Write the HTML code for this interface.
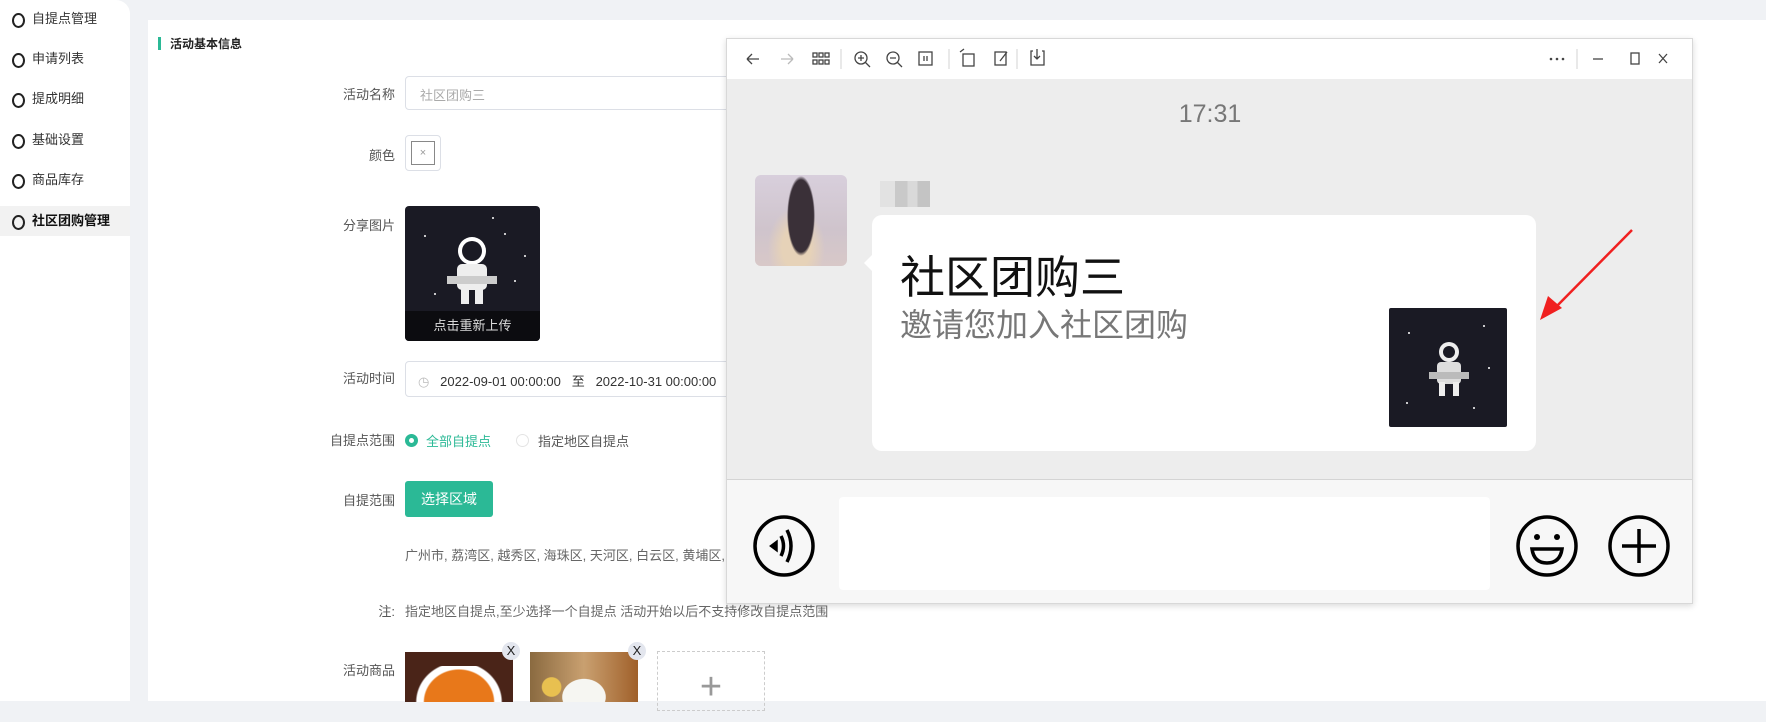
<!DOCTYPE html>
<html><head><meta charset="utf-8"><style>
*{margin:0;padding:0;box-sizing:border-box}
body{width:1766px;height:701px;background:#f0f2f5;font-family:"Liberation Sans","Noto Sans CJK SC",sans-serif;position:relative;overflow:hidden;color:#606266}
.a{position:absolute}
.side{left:0;top:0;width:130px;height:701px;background:#fff;border-top-right-radius:14px}
.si{position:absolute;left:0;width:130px;height:30px;font-size:13px;color:#333;line-height:30px;padding-left:32px}
.si:before{content:"";position:absolute;left:12px;top:9px;width:9px;height:11px;border:2px solid #222;border-radius:50%}
.card{left:148px;top:20px;width:1618px;height:681px;background:#fff}
.lbl{position:absolute;right:1371px;font-size:13px;color:#555;text-align:right;white-space:nowrap}
.inp{position:absolute;border:1px solid #dcdfe6;border-radius:4px;background:#fff}
</style></head><body>
<div class="a side">
<div class="si" style="top:4px">自提点管理</div>
<div class="si" style="top:44px">申请列表</div>
<div class="si" style="top:84px">提成明细</div>
<div class="si" style="top:125px">基础设置</div>
<div class="si" style="top:165px">商品库存</div>
<div class="si" style="top:206px;background:#f2f2f2;font-weight:bold;color:#111">社区团购管理</div>
</div>
<div class="a card"></div>
<div class="a" style="left:158px;top:37px;width:3px;height:13px;background:#2bb996"></div>
<div class="a" style="left:170px;top:35px;font-size:12px;font-weight:bold;color:#222">活动基本信息</div>

<div class="lbl" style="top:84px">活动名称</div>
<div class="inp" style="left:405px;top:76px;width:330px;height:34px;font-size:13px;color:#aaa;padding:8px 14px">社区团购三</div>
<div class="lbl" style="top:145px">颜色</div>
<div class="inp" style="left:405px;top:135px;width:36px;height:36px;padding:5px"><div style="width:24px;height:24px;border:1px solid #888;font-size:11px;color:#999;text-align:center;line-height:22px">×</div></div>
<div class="lbl" style="top:215px">分享图片</div>
<div class="a" style="left:405px;top:206px;width:135px;height:135px;background:#1a1a24;border-radius:4px;overflow:hidden">
<svg width="135" height="105" viewBox="0 0 135 105"><g fill="#fff"><circle cx="20" cy="30" r="1"/><circle cx="88" cy="12" r="1"/><circle cx="120" cy="50" r="1"/><circle cx="110" cy="75" r="1"/><circle cx="30" cy="88" r="1"/><circle cx="100" cy="28" r="1"/></g>
<circle cx="67" cy="45" r="14" fill="#fff"/><circle cx="67" cy="45" r="10" fill="#1a1a24"/><rect x="52" y="58" width="30" height="26" rx="5" fill="#eee"/><rect x="42" y="70" width="50" height="8" fill="#ccc"/><rect x="56" y="80" width="8" height="18" fill="#eee"/><rect x="70" y="80" width="8" height="18" fill="#eee"/></svg>
<div style="position:absolute;left:0;bottom:0;width:135px;height:30px;background:#0c0c10;color:#ddd;font-size:13px;text-align:center;line-height:30px">点击重新上传</div></div>
<div class="lbl" style="top:368px">活动时间</div>
<div class="inp" style="left:405px;top:361px;width:330px;height:36px;font-size:13px;color:#333;padding:9px 12px;white-space:nowrap"><span style="color:#bbb">◷</span>&nbsp;&nbsp; 2022-09-01 00:00:00 &nbsp; 至 &nbsp; 2022-10-31 00:00:00</div>
<div class="lbl" style="top:430px">自提点范围</div>
<div class="a" style="left:405px;top:434px;width:13px;height:13px;border-radius:50%;border:4px solid #2bb996"></div>
<div class="a" style="left:426px;top:431px;font-size:13px;color:#2bb996">全部自提点</div>
<div class="a" style="left:516px;top:434px;width:13px;height:13px;border-radius:50%;border:1px solid #e4e4e4"></div>
<div class="a" style="left:538px;top:431px;font-size:13px;color:#555">指定地区自提点</div>
<div class="lbl" style="top:490px">自提范围</div>
<div class="a" style="left:405px;top:481px;width:88px;height:36px;background:#2bb996;border-radius:3px;color:#fff;font-size:14px;text-align:center;line-height:36px">选择区域</div>
<div class="a" style="left:405px;top:545px;font-size:13px;color:#666;white-space:nowrap">广州市, 荔湾区, 越秀区, 海珠区, 天河区, 白云区, 黄埔区, 番</div>
<div class="lbl" style="top:601px">注:</div>
<div class="a" style="left:405px;top:601px;font-size:13px;color:#666;white-space:nowrap">指定地区自提点,至少选择一个自提点 活动开始以后不支持修改自提点范围</div>
<div class="lbl" style="top:660px">活动商品</div>
<div class="a" style="left:405px;top:652px;width:108px;height:50px;background:linear-gradient(#4a2418 0 14px,transparent 14px),radial-gradient(ellipse at 50% 100%,#e8781a 45%,#fff 47%,#fff 55%,#4a2418 57%)"></div>
<div class="a" style="left:530px;top:652px;width:108px;height:50px;background:radial-gradient(ellipse at 50% 90%,#f6f6f2 28%,transparent 29%),radial-gradient(circle at 20% 70%,#e8c050 10%,transparent 11%),linear-gradient(90deg,#8a6a40,#c9a070 50%,#a0602a)"></div>
<div class="a" style="left:502px;top:642px;width:18px;height:18px;border-radius:50%;background:#e3e6ee;font-size:13px;color:#222;text-align:center;line-height:18px">X</div>
<div class="a" style="left:628px;top:642px;width:18px;height:18px;border-radius:50%;background:#e3e6ee;font-size:13px;color:#222;text-align:center;line-height:18px">X</div>
<div class="a" style="left:657px;top:651px;width:108px;height:60px;border:1px dashed #ccc;font-size:38px;color:#999;text-align:center;line-height:70px;font-weight:200">+</div>

<!-- window -->
<div class="a" style="left:726px;top:38px;width:967px;height:566px;background:#fff;border:1px solid #d8d8d8;box-shadow:0 2px 6px rgba(0,0,0,.15)"></div>
<svg class="a" style="left:727px;top:39px" width="965" height="40" fill="none" stroke="#444" stroke-width="1.3">
<path d="M20 20h12M20 20l5-5M20 20l5 5"/>
<path d="M54 20h12M66 20l-5-5M66 20l-5 5" stroke="#bbb"/>
<g><rect x="86" y="14" width="4" height="4"/><rect x="92" y="14" width="4" height="4"/><rect x="98" y="14" width="4" height="4"/><rect x="86" y="21" width="4" height="4"/><rect x="92" y="21" width="4" height="4"/><rect x="98" y="21" width="4" height="4"/></g>
<path d="M114 10v20M222 10v20M290 10v20" stroke="#ddd"/>
<circle cx="134" cy="19" r="6"/><path d="M138 23l5 5M131 19h6M134 16v6"/>
<circle cx="166" cy="19" r="6"/><path d="M170 23l5 5M163 19h6"/>
<rect x="192" y="13" width="13" height="13"/><path d="M197 17v5M200 17v5"/>
<rect x="236" y="15" width="11" height="12"/><path d="M233 13l4-3"/>
<rect x="268" y="13" width="11" height="13"/><path d="M273 22l7-9"/>
<path d="M306 12h-2v14h13v-14h-2M310 10v10M307 17l3 3 3-3"/>
<g fill="#444" stroke="none"><circle cx="824" cy="20" r="1.3"/><circle cx="830" cy="20" r="1.3"/><circle cx="836" cy="20" r="1.3"/></g>
<path d="M850 10v20" stroke="#ddd"/>
<path d="M866 20h10"/><rect x="904" y="14" width="8" height="11"/><path d="M932 15l8 9M940 15l-8 9"/>
</svg>
<div class="a" style="left:727px;top:79px;width:965px;height:400px;background:#ededed"></div>
<div class="a" style="left:727px;top:479px;width:965px;height:124px;background:#f7f7f7;border-top:1px solid #d4d4d4"></div>
<div class="a" style="left:1150px;top:100px;width:120px;text-align:center;font-size:25px;color:#777">17:31</div>
<div class="a" style="left:755px;top:175px;width:92px;height:91px;border-radius:6px;background:radial-gradient(ellipse 14px 40px at 50% 45%,#3a3038 90%,transparent 100%),radial-gradient(ellipse at 45% 80%,#e6d2b8 20%,transparent 40%),linear-gradient(#d8cfdc,#cfc4cc 60%,#d8c8c8)"></div>
<div class="a" style="left:880px;top:181px;width:50px;height:26px;background:linear-gradient(90deg,#e2e2e2 0 30%,#c9c9c9 30% 55%,#d9d9d9 55% 75%,#c4c4c4 75%)"></div>
<div class="a" style="left:872px;top:215px;width:664px;height:236px;background:#fff;border-radius:10px"></div>
<div class="a" style="left:864px;top:254px;width:0;height:0;border:9px solid transparent;border-right-color:#fff;border-left:0"></div>
<div class="a" style="left:900px;top:241px;font-size:45px;color:#111;white-space:nowrap">社区团购三</div>
<div class="a" style="left:900px;top:300px;font-size:32px;color:#777;white-space:nowrap">邀请您加入社区团购</div>
<div class="a" style="left:1389px;top:308px;width:118px;height:119px;background:#1a1a24;border-radius:2px">
<svg width="118" height="119"><g fill="#fff"><circle cx="20" cy="25" r="1"/><circle cx="95" cy="18" r="1"/><circle cx="100" cy="60" r="1"/><circle cx="18" cy="95" r="1"/><circle cx="85" cy="100" r="1"/></g><circle cx="60" cy="44" r="10" fill="#eee"/><circle cx="60" cy="44" r="6" fill="#1a1a24"/><rect x="48" y="54" width="24" height="22" rx="4" fill="#ddd"/><rect x="40" y="64" width="40" height="7" fill="#bbb"/><rect x="50" y="74" width="6" height="14" fill="#eee"/><rect x="64" y="74" width="6" height="14" fill="#eee"/></svg></div>
<svg class="a" style="left:1530px;top:225px" width="110" height="100"><path d="M102 5L22 86" stroke="#f02020" stroke-width="2.5"/><path d="M10 95l8-24 14 12z" fill="#f02020"/></svg>
<div class="a" style="left:839px;top:497px;width:651px;height:93px;background:#fff;border-radius:4px"></div>
<svg class="a" style="left:750px;top:512px" width="960" height="68" fill="none" stroke="#000" stroke-width="3.5">
<circle cx="34" cy="34" r="29"/><path d="M26 31l-4 3 4 3z" fill="#000"/><path d="M31 24q5 10 0 20M37 18q8 16 0 32"/>
<circle cx="797" cy="34" r="29"/><circle cx="787" cy="25" r="3" fill="#000" stroke="none"/><circle cx="807" cy="25" r="3" fill="#000" stroke="none"/><path d="M782 37h30q-2 14-15 14t-15-14z"/>
<circle cx="889" cy="34" r="29"/><path d="M889 17v34M872 34h34"/>
</svg>
</body></html>
